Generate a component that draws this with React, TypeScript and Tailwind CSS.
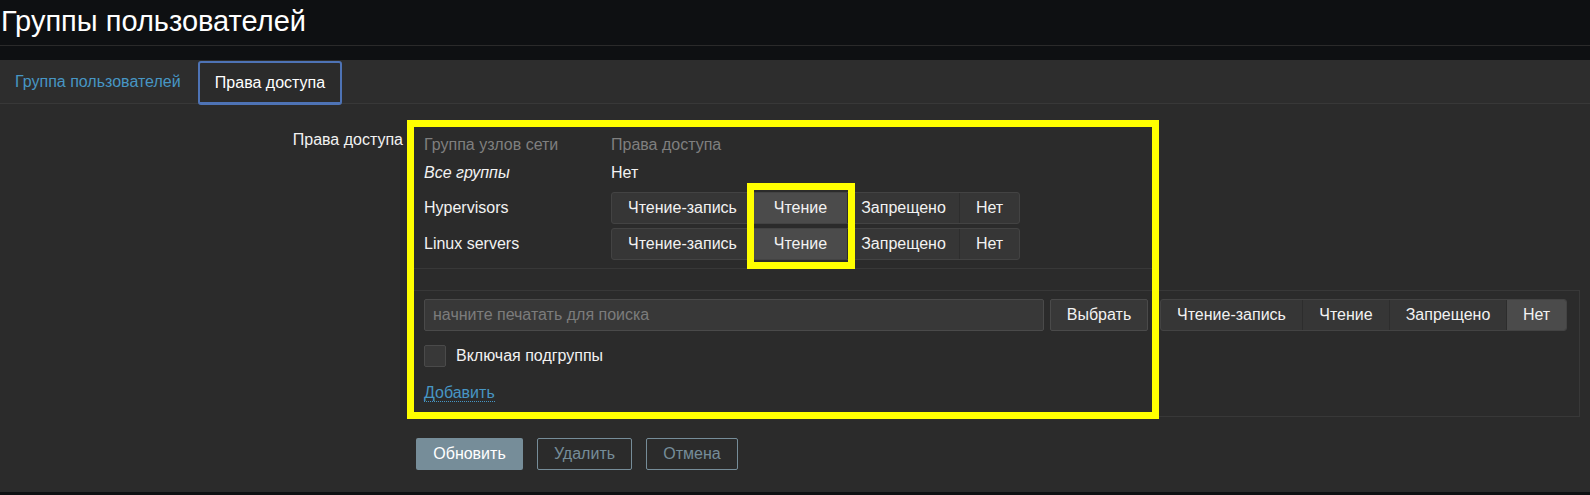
import React from 'react';
import clsx from 'clsx';

type Seg = { label: string; w: string; active?: boolean };

const topGroup: Seg[] = [
  { label: 'Чтение-запись', w: 'w-[141px]' },
  { label: 'Чтение', w: 'w-[94px]', active: true },
  { label: 'Запрещено', w: 'w-[112px]' },
  { label: 'Нет', w: 'w-[60px]' },
];

const addGroup: Seg[] = [
  { label: 'Чтение-запись', w: 'w-[141px]' },
  { label: 'Чтение', w: 'w-[87px]' },
  { label: 'Запрещено', w: 'w-[117px]' },
  { label: 'Нет', w: 'w-[60px]', active: true },
];

const RadioGroup: React.FC<{ items: Seg[] }> = ({ items }) => (
  <div className="flex h-[32px] shrink-0 rounded-[3px] border border-[#434343] bg-[#363636] overflow-hidden">
    {items.map((s, i) => (
      <div
        key={s.label}
        className={clsx(
          'flex items-center justify-center text-[#f2f2f2]',
          s.w,
          i > 0 && 'border-l border-[#2d2d2d]',
          s.active && 'bg-[#4b4b4b]'
        )}
      >
        {s.label}
      </div>
    ))}
  </div>
);

const rows = [
  { name: 'Hypervisors' },
  { name: 'Linux servers' },
];

export default function App() {
  return (
    <div className="relative w-[1590px] h-[495px] overflow-hidden bg-[#0e1012] text-[16px] leading-[20px] text-[#f2f2f2] font-['Liberation_Sans',Arial,sans-serif]">
      {/* Page header */}
      <header className="h-[46px] border-b border-[#2a2a2a] pt-[7px] pl-[1px]">
        <h1 className="text-[29px] leading-[29px] text-white">Группы пользователей</h1>
      </header>
      <div className="h-[14px]" />

      {/* Tabs */}
      <nav className="flex h-[44px] bg-[#2d2d2d] border-b border-[#383838]">
        <div className="flex h-[43px] w-[198px] items-center pl-[15px] text-[#4796c4]">Группа пользователей</div>
        <div className="relative z-10 mt-[1px] flex h-[44px] w-[144px] items-center justify-center rounded-[3px] border-2 border-b-[3px] border-[#4e73b5] bg-[#2b2b2b] text-white">
          Права доступа
        </div>
      </nav>

      {/* Form */}
      <main className="h-[388px] bg-[#2b2b2b]">
        <div className="flex">
          <div className="w-[403px] shrink-0 pt-[26px] text-right">Права доступа</div>
          <div className="ml-[9px] pt-[28px]">
            {/* existing permissions */}
            <div className="w-[740px] border-b border-[#383838] pb-[6px]">
              <div className="flex h-[26px] items-center pl-[12px] text-[#7f7f7f]">
                <div className="w-[187px]">Группа узлов сети</div>
                <div>Права доступа</div>
              </div>
              <div className="mb-[2px] flex h-[30px] items-center pl-[12px]">
                <div className="w-[187px] italic">Все группы</div>
                <div>Нет</div>
              </div>
              {rows.map((r) => (
                <div key={r.name} className="flex h-[36px] items-center pl-[12px]">
                  <div className="w-[187px]">{r.name}</div>
                  <RadioGroup items={topGroup} />
                </div>
              ))}
            </div>

            {/* add new permission */}
            <div className="mt-[21px] w-[1168px] border border-[#383838] pl-[11px] pt-[8px] pb-[13px]">
              <div className="flex h-[32px]">
                <div className="flex w-[620px] items-center rounded-[2px] border border-[#4a4a4a] bg-[#383838] px-[8px] text-[#7c7c7c]">
                  начните печатать для поиска
                </div>
                <div className="ml-[6px] flex w-[98px] items-center justify-center rounded-[2px] border border-[#4a4a4a] bg-[#383838]">
                  Выбрать
                </div>
                <div className="ml-[12px]">
                  <RadioGroup items={addGroup} />
                </div>
              </div>
              <div className="mt-[14px] flex h-[22px] items-center">
                <div className="h-[22px] w-[22px] rounded-[2px] border border-[#4a4a4a] bg-[#383838]" />
                <span className="ml-[10px]">Включая подгруппы</span>
              </div>
              <div className="mt-[16px] h-[20px]">
                <span className="border-b border-dotted border-[#4796c4] text-[#4796c4]">Добавить</span>
              </div>
            </div>

            {/* form buttons */}
            <div className="mt-[21px] ml-[4px] flex gap-[14px]">
              <div className="flex h-[32px] w-[107px] items-center justify-center rounded-[2px] bg-[#768d99] text-white">Обновить</div>
              <div className="flex h-[32px] w-[95px] items-center justify-center rounded-[2px] border border-[#768d99] text-[#768d99]">Удалить</div>
              <div className="flex h-[32px] w-[92px] items-center justify-center rounded-[2px] border border-[#768d99] text-[#768d99]">Отмена</div>
            </div>
          </div>
        </div>
      </main>

      {/* Yellow annotation frames */}
      <div className="pointer-events-none absolute left-[407px] top-[120px] h-[299px] w-[752px] border-[7px] border-[#ffff00]" />
      <div className="pointer-events-none absolute left-[747px] top-[183px] h-[86px] w-[108px] border-[7px] border-[#ffff00]" />
    </div>
  );
}
